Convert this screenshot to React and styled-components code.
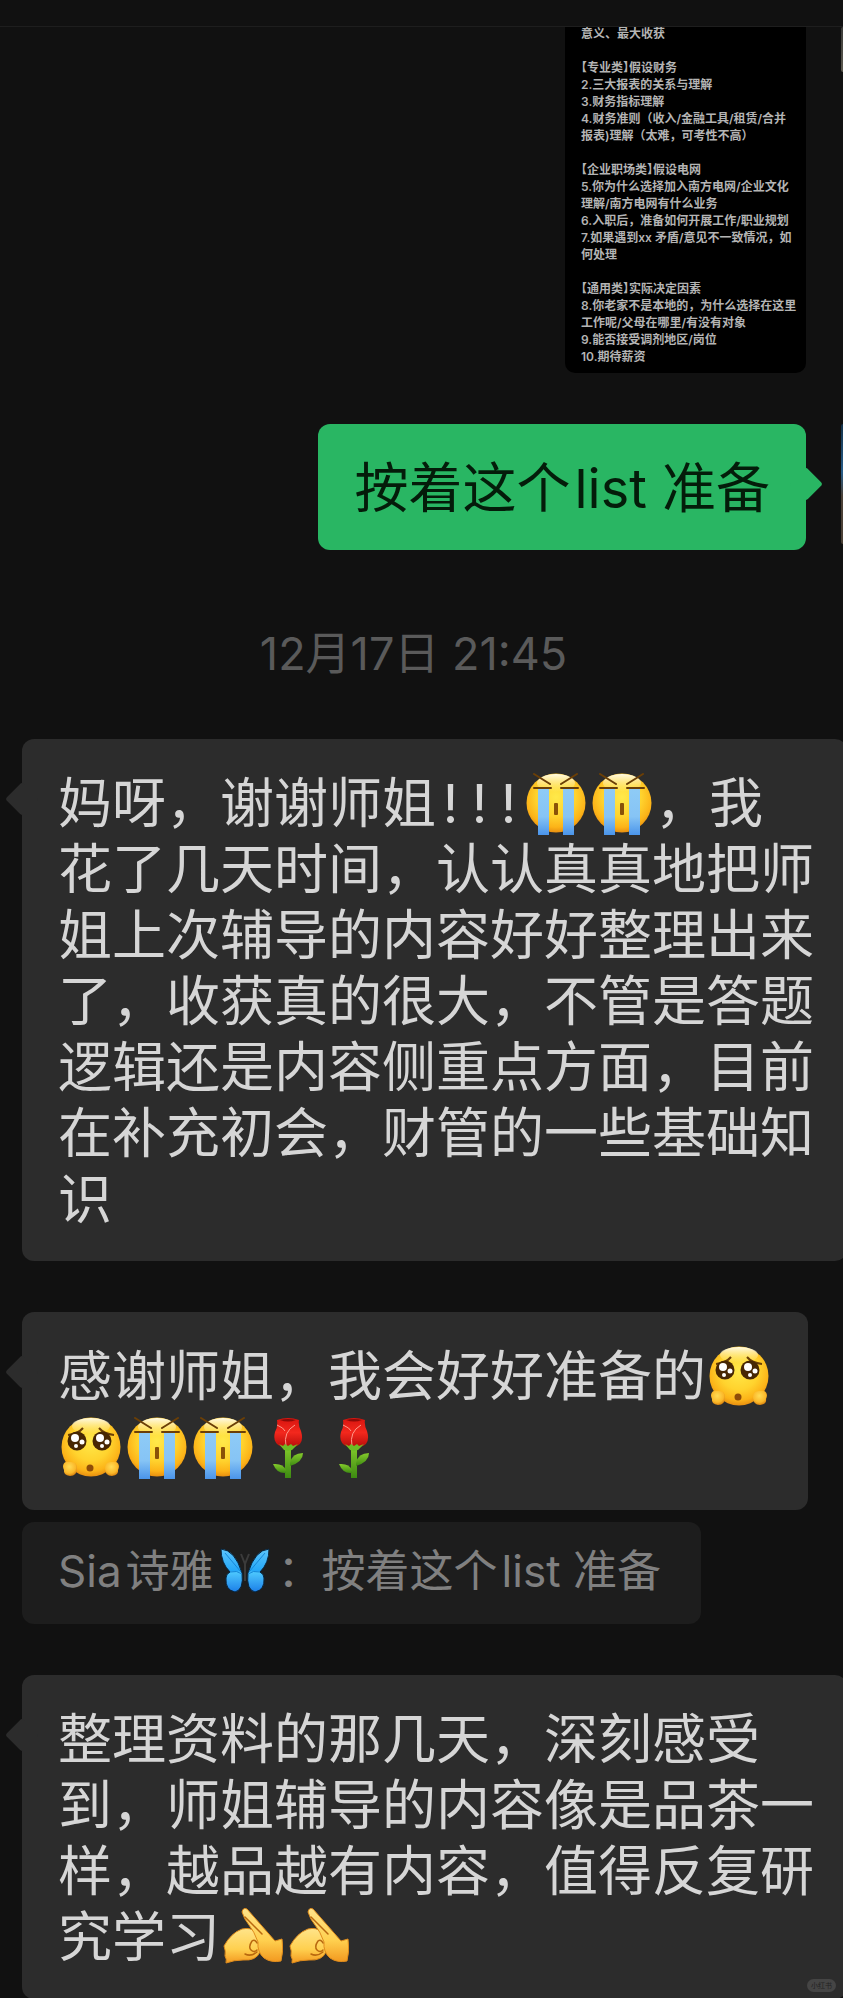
import React from 'react';
import styled, { createGlobalStyle, css } from 'styled-components';

const GlobalStyle = createGlobalStyle`
  * {
    box-sizing: border-box;
  }

  body {
    margin: 0;
    background: #111;
    font-family: Inter, 'Noto Sans CJK SC', sans-serif;
  }
`;

const notes = [
  '意义、最大收获',
  '',
  '【专业类】假设财务',
  '2.三大报表的关系与理解',
  '3.财务指标理解',
  '4.财务准则（收入/金融工具/租赁/合并',
  '报表)理解（太难，可考性不高）',
  '',
  '【企业职场类】假设电网',
  '5.你为什么选择加入南方电网/企业文化',
  '理解/南方电网有什么业务',
  '6.入职后，准备如何开展工作/职业规划',
  '7.如果遇到xx 矛盾/意见不一致情况，如',
  '何处理',
  '',
  '【通用类】实际决定因素',
  '8.你老家不是本地的，为什么选择在这里',
  '工作呢/父母在哪里/有没有对象',
  '9.能否接受调剂地区/岗位',
  '10.期待薪资'
];

// Shared gradients, referenced by id from every emoji
const EmojiDefs = () => (
  <HiddenSvg aria-hidden="true">
    <defs>
      <radialGradient id="face" cx="50%" cy="40%" r="60%">
        <stop offset="0" stopColor="#ffe94a" />
        <stop offset="0.55" stopColor="#ffd32e" />
        <stop offset="0.85" stopColor="#fcb318" />
        <stop offset="1" stopColor="#e88f10" />
      </radialGradient>
      <linearGradient id="shine" x1="0" y1="0" x2="0" y2="1">
        <stop offset="0" stopColor="#fffbe6" />
        <stop offset="1" stopColor="#fff2a0" stopOpacity="0" />
      </linearGradient>
      <linearGradient id="tear" x1="0" y1="0" x2="0" y2="1">
        <stop offset="0" stopColor="#8ecbf6" />
        <stop offset="0.6" stopColor="#86c4f5" />
        <stop offset="1" stopColor="#4a94ea" />
      </linearGradient>
      <radialGradient id="fist" cx="45%" cy="35%" r="65%">
        <stop offset="0" stopColor="#ffdc55" />
        <stop offset="0.7" stopColor="#fbb829" />
        <stop offset="1" stopColor="#d98310" />
      </radialGradient>
      <linearGradient id="petal" x1="0" y1="0" x2="0" y2="1">
        <stop offset="0" stopColor="#d8150f" />
        <stop offset="0.5" stopColor="#f3281d" />
        <stop offset="1" stopColor="#b80d0b" />
      </linearGradient>
      <linearGradient id="leaf" x1="0" y1="0" x2="0" y2="1">
        <stop offset="0" stopColor="#86cc2c" />
        <stop offset="1" stopColor="#3d8a12" />
      </linearGradient>
      <linearGradient id="hand" x1="0" y1="0" x2="0" y2="1">
        <stop offset="0" stopColor="#ffe48a" />
        <stop offset="0.6" stopColor="#ffd04f" />
        <stop offset="1" stopColor="#f39a20" />
      </linearGradient>
      <linearGradient id="wing" x1="0" y1="0" x2="0" y2="1">
        <stop offset="0" stopColor="#5cc4fb" />
        <stop offset="0.5" stopColor="#25a8f8" />
        <stop offset="0.55" stopColor="#4cc6fd" />
        <stop offset="1" stopColor="#1c7fe8" />
      </linearGradient>
    </defs>
  </HiddenSvg>
);

const Sob = () => (
  <Emoji viewBox="0 0 60 62" role="img" aria-label="大哭">
    <circle cx="30" cy="30" r="29.5" fill="url(#face)" />
    <ellipse cx="30" cy="10" rx="19" ry="9" fill="url(#shine)" />
    <path d="M12 16h11v46H12z M37 16h11v46H37z" fill="url(#tear)" />
    <path
      d="M8 1l16 10M51 1L35 11M8 15h17M35 15h17"
      stroke="#6b3f06"
      strokeWidth="2"
      strokeLinecap="round"
    />
    <rect x="28" y="30" width="4" height="12" rx="1" fill="#8a5208" />
  </Emoji>
);

const Plead = () => (
  <Emoji viewBox="0 0 60 62" role="img" aria-label="可怜">
    <circle cx="30" cy="30" r="29.5" fill="url(#face)" />
    <ellipse cx="30" cy="9" rx="19" ry="8" fill="url(#shine)" />
    <path
      d="M7 18q10-1 15-7M53 18q-10-1-15-7"
      fill="none"
      stroke="#6b3f06"
      strokeWidth="2"
    />
    <circle cx="16" cy="24" r="9.5" fill="#472704" />
    <circle cx="41" cy="24" r="9.5" fill="#472704" />
    <g fill="#fff">
      <circle cx="14" cy="21" r="4" />
      <circle cx="21" cy="25" r="2.5" />
      <circle cx="15" cy="29" r="2" />
      <circle cx="39" cy="21" r="4" />
      <circle cx="46" cy="25" r="2.5" />
      <circle cx="41" cy="29" r="2" />
    </g>
    <circle cx="29" cy="51" r="3.5" fill="#8f4d08" />
    <path
      d="M2 49q1-5 6-4q8-1 8 6q0 8-7 8q-7-1-6-6q-1-2-1-4z"
      fill="url(#fist)"
    />
    <path
      d="M58 49q-1-5-6-4q-8-1-8 6q0 8 7 8q7-1 6-6q1-2 1-4z"
      fill="url(#fist)"
    />
  </Emoji>
);

const Rose = () => (
  <Emoji viewBox="0 0 60 62" role="img" aria-label="玫瑰">
    <path d="M26 28h6v33h-6z" fill="url(#leaf)" />
    <path d="M31 46q2-10 13-10q0 9-13 13z" fill="url(#leaf)" />
    <path d="M27 56Q18 57 14 47q10-1 13 6z" fill="url(#leaf)" />
    <path
      d="M18 3q11-4 22 0q-1 5 2 11q4 14-7 16h-12q-10-3-7-15q3-5 2-12z"
      fill="url(#petal)"
    />
    <path d="M21 3q8-2 16 0q-8 3-16 0z" fill="#8d0907" />
    <path
      d="M36 8q-12 7-9 21M18 8q7 3 8 6"
      fill="none"
      stroke="#ff9a8c"
      strokeWidth="1"
    />
    <path d="M20 27l4 2 2-2 3 2 3-2 2 2 5-2-6 6-4 1-4-1z" fill="#6dbb25" />
  </Emoji>
);

const Hands = () => (
  <Emoji viewBox="0 0 60 62" role="img" aria-label="抱拳">
    <path
      d="M1 39Q8 26 19 22q9-2 13 3q7 8 5 20q-4 9-17 8q-9 0-17 3q1-4-1-7q1-5-1-10z"
      fill="url(#hand)"
      stroke="#e08c1c"
      strokeWidth="1"
    />
    <path
      d="M19 5q1-5 5-3l28 32l7-2q2 11-1 22q-10 2-17-3q-7-6-6-16q-4-11-9-17q-5-6-7-13z"
      fill="url(#hand)"
      stroke="#e08c1c"
      strokeWidth="1"
    />
    <path
      d="M22 10l17 17M34 43q-3 3-6 0t1-9q3-2 5 2M22 47q6 3 12-2"
      fill="none"
      stroke="#b9680f"
      strokeWidth="1.5"
      strokeLinecap="round"
    />
  </Emoji>
);

const Butterfly = () => (
  <SmallEmoji viewBox="0 0 50 48" role="img" aria-label="蝴蝶">
    <path
      d="M1 2q14 1 21 24q2 17-7 19q-10-2-9-14q0-4 4-6Q1 16 1 2zM49 2q-14 1-21 24q-2 17 7 19q10-2 9-14q0-4-4-6q9-9 9-23z"
      fill="url(#wing)"
      stroke="#07253f"
      strokeWidth="1"
    />
    <path
      d="M10 25q7-2 12 2M40 25q-7-2-12 2M5 6l16 19M45 6L29 25"
      fill="none"
      stroke="#1687d8"
      strokeWidth="1"
    />
    <path
      d="M25 17v17M25 17L21 7M25 17l4-10"
      fill="none"
      stroke="#3b3b3b"
      strokeWidth="2"
    />
  </SmallEmoji>
);

const App = () => (
  <Page>
    <GlobalStyle />
    <EmojiDefs />
    <TopBar />
    <Thread>
      <SentRow>
        <NoteCard>
          {notes.map((note, i) => (
            <NoteLine key={i} $heading={note.startsWith('【')}>
              {note}
            </NoteLine>
          ))}
        </NoteCard>
        <AvatarEdge $height={45} $colors="#3a3a38, #5c594f" />
      </SentRow>

      <SentRow>
        <Bubble $sent>
          <Line>
            按着这个<Latin>list 准备</Latin>
          </Line>
        </Bubble>
        <AvatarEdge $height={120} $colors="#14324a, #275c88 40%, #4a4036 60%" />
      </SentRow>

      <Time>12月17日 21:45</Time>

      <Bubble $wide>
        <Line>
          妈呀，谢谢师姐<Mark>!</Mark>
          <Mark>!</Mark>
          <Mark>!</Mark>
          <Sob />
          <Sob />
          ，我
        </Line>
        <Line>花了几天时间，认认真真地把师</Line>
        <Line>姐上次辅导的内容好好整理出来</Line>
        <Line>了，收获真的很大，不管是答题</Line>
        <Line>逻辑还是内容侧重点方面，目前</Line>
        <Line>在补充初会，财管的一些基础知</Line>
        <Line>识</Line>
      </Bubble>

      <Reply>
        <Bubble>
          <Line>
            感谢师姐，我会好好准备的
            <Plead />
          </Line>
          <Line $emojiOnly>
            <Plead />
            <Sob />
            <Sob />
            <Rose />
            <Rose />
          </Line>
        </Bubble>
        <Quote>
          Sia<Latin>诗雅</Latin>
          <Butterfly />
          ：按着这个<Latin>list 准备</Latin>
        </Quote>
      </Reply>

      <Bubble $wide>
        <Line>整理资料的那几天，深刻感受</Line>
        <Line>到，师姐辅导的内容像是品茶一</Line>
        <Line>样，越品越有内容，值得反复研</Line>
        <Line>
          究学习
          <Hands />
          <Hands />
        </Line>
      </Bubble>
    </Thread>
    <Watermark>小红书</Watermark>
  </Page>
);

const Page = styled.main`
  position: relative;
  overflow: hidden;
`;

const HiddenSvg = styled.svg`
  position: absolute;
  width: 0;
  height: 0;
`;

const TopBar = styled.header`
  height: 27px;
  border-bottom: 1px solid #1e1e1e;
`;

const Thread = styled.section`
  display: flex;
  flex-direction: column;
  align-items: flex-start;
  gap: 51px;
  padding-left: 22px;
`;

const SentRow = styled.div`
  display: flex;
  align-self: flex-end;
  gap: 35px;
`;

const NoteCard = styled.div`
  width: 241px;
  padding: 0 0 6px 16px;
  border-radius: 0 0 10px 10px;
  background: #000;
`;

const NoteLine = styled.p`
  height: 17px;
  margin: 0;
  color: #b4b4b4;
  font-size: 12px;
  font-weight: 600;
  line-height: 14px;
  white-space: nowrap;

  ${({ $heading }) =>
    $heading &&
    css`
      font-feature-settings: 'halt';
    `}
`;

const AvatarEdge = styled.div`
  flex: 0 0 2px;
  height: ${({ $height }) => $height}px;
  border-radius: 2px 0 0 2px;
  background: linear-gradient(${({ $colors }) => $colors});
`;

const Bubble = styled.div`
  position: relative;
  padding: 32px 36px 28px;
  border-radius: 12px;
  background: #2c2c2c;
  color: #d6d6d6;

  &::before {
    content: '';
    position: absolute;
    top: 48px;
    left: -12px;
    width: 24px;
    height: 24px;
    border-radius: 3px;
    background: inherit;
    transform: rotate(45deg);
  }

  ${({ $wide }) =>
    $wide &&
    css`
      align-self: stretch;
      margin-right: -4px;
    `}

  ${({ $sent }) =>
    $sent &&
    css`
      background: #29b663;
      color: #041c0a;

      &::before {
        left: auto;
        right: -12px;
      }
    `}
`;

const Line = styled.p`
  position: relative;
  display: flex;
  align-items: center;
  height: 66px;
  margin: 0;
  font-size: 54px;
  line-height: 66px;
  white-space: pre;

  ${({ $emojiOnly }) =>
    $emojiOnly &&
    css`
      margin-top: 6px;
      padding-bottom: 2px;
    `}
`;

// Small gap where Chinese and Latin text meet
const Latin = styled.span`
  margin-left: 4px;
`;

const Mark = styled.span`
  width: 29px;
  text-align: center;
`;

const Emoji = styled.svg`
  flex: none;
  width: 60px;
  height: 62px;
  margin: 0 3px;
`;

const SmallEmoji = styled.svg`
  flex: none;
  width: 50px;
  height: 48px;
  margin: 0 8px 0 6px;
`;

const Time = styled.time`
  align-self: center;
  margin: 23px 38px 4px 0;
  color: #5a5a5a;
  font-size: 45px;
  line-height: 60px;
`;

const Reply = styled.div`
  display: flex;
  flex-direction: column;
  align-items: flex-start;
  gap: 12px;
`;

const Quote = styled.blockquote`
  display: flex;
  align-items: center;
  height: 102px;
  margin: 0;
  padding: 0 40px 4px 36px;
  border-radius: 12px;
  background: #1d1d1d;
  color: #808080;
  font-size: 44px;
  line-height: 60px;
  white-space: pre;
`;

const Watermark = styled.small`
  position: absolute;
  right: 7px;
  bottom: 7px;
  padding: 0 4px;
  border-radius: 7px;
  background: #454545;
  color: #222;
  font-size: 7px;
  line-height: 13px;
`;

export default App;
